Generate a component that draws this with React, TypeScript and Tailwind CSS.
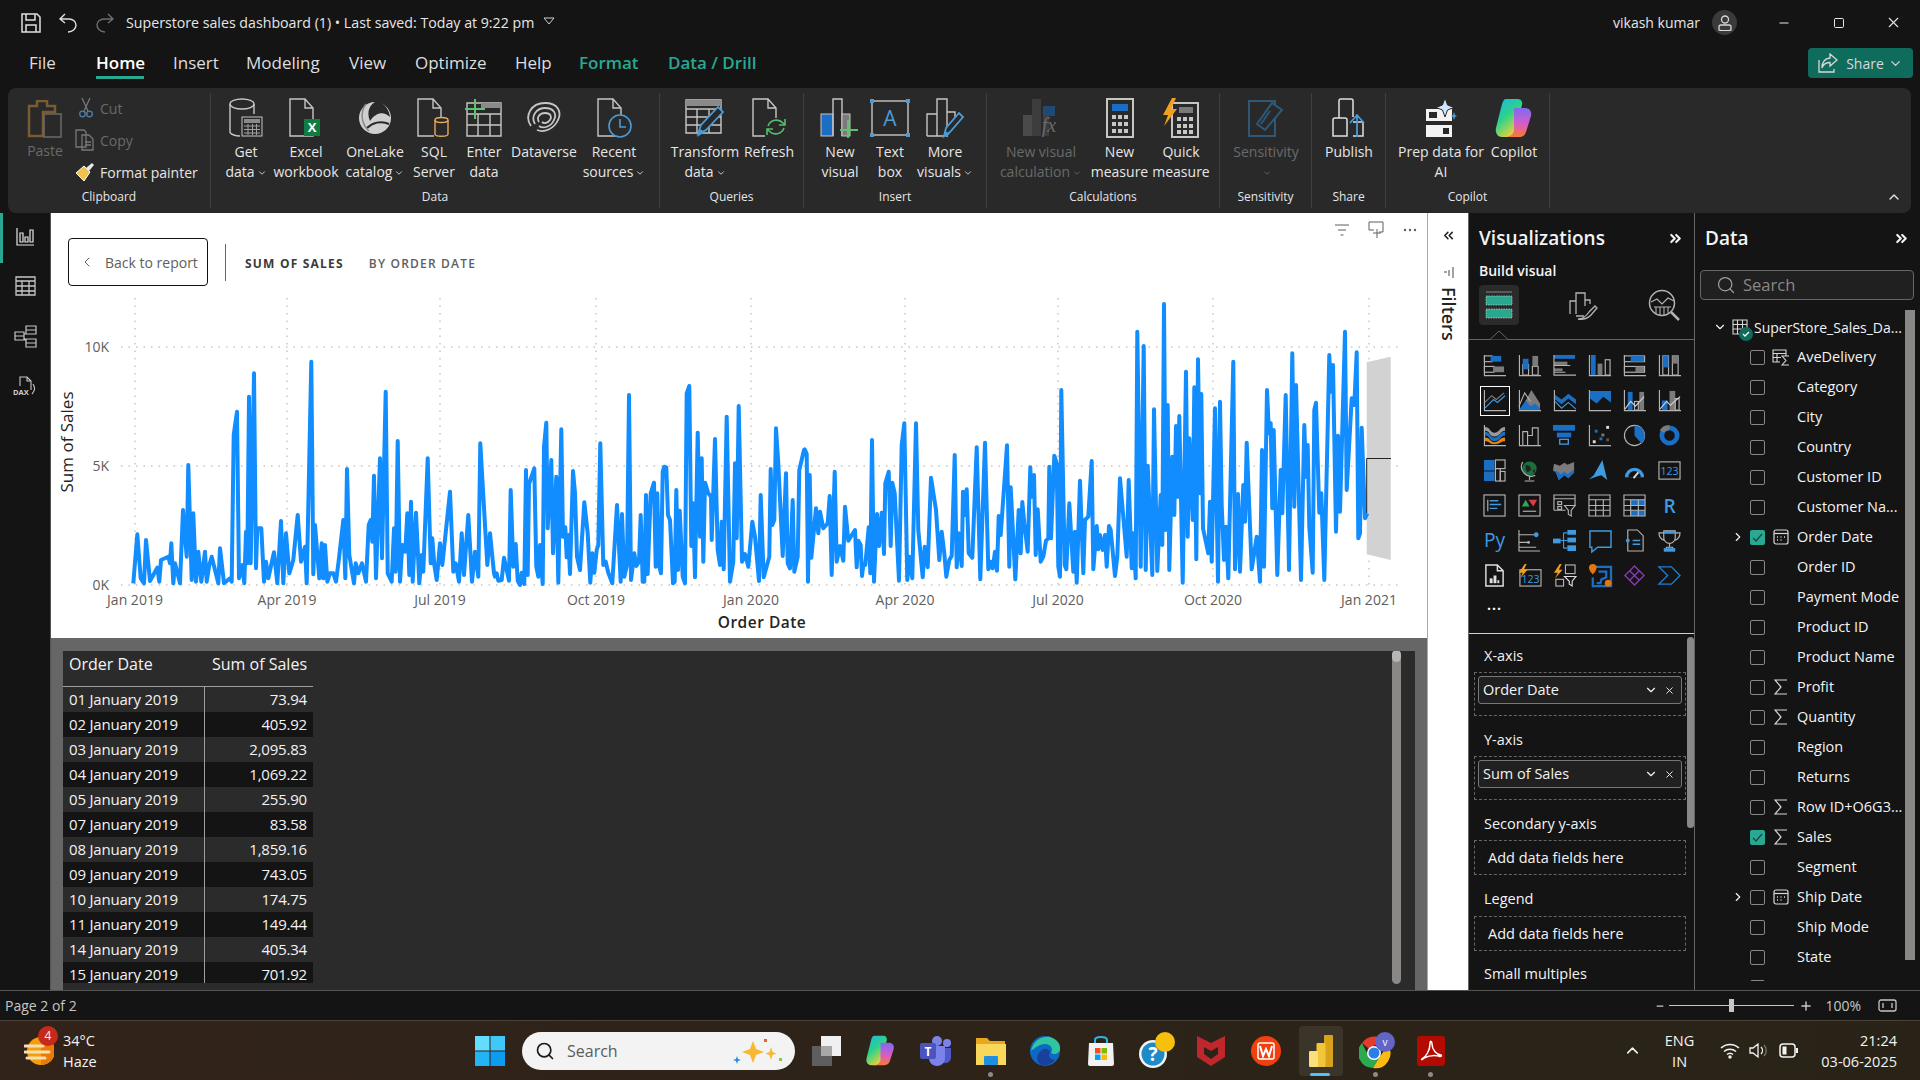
import type { ReactNode } from 'react';
import { ChevronDown, ChevronRight, ChevronUp, ChevronsLeft, ChevronsRight, Minus, Plus, Search, Square, X } from 'lucide-react';

const G = '#b5b3b1';
const B = '#1a6fc4';
const L = '#3f9ae0';
const D = '#7b7b7b';

const bl = (x: number, y: number, w: number, h: number) => <rect x={x} y={y} width={w} height={h} fill={B} stroke="none" />;
const gy = (x: number, y: number, w: number, h: number) => <rect x={x} y={y} width={w} height={h} fill={D} stroke="none" />;
const box = (x: number, y: number, w: number, h: number) => <rect x={x} y={y} width={w} height={h} />;
const axes = <path d="M1.5 1v21.5H24" />;

const vizIcons: ReactNode[] = [
  <>{axes}{box(1.5, 2, 8, 6)}{bl(8, 2, 11, 6)}{box(1.5, 13, 10, 6)}{gy(11, 13, 11, 6)}</>,
  <>{axes}{box(5, 11, 6, 11)}{bl(5, 5, 6, 11)}{box(15, 13, 6, 9)}{gy(15, 2, 6, 11)}</>,
  <>{bl(1, 1, 22, 4)}{gy(1, 8, 14, 4)}{gy(1, 15, 9, 3)}<path d="M1 1v21h23M1 12h17M1 19h12" /></>,
  <>{axes}{bl(3, 1, 5, 21)}{gy(10, 10, 5, 12)}{box(18, 6, 5, 16)}</>,
  <>{axes}{box(1.5, 2, 21, 6)}{bl(8, 2, 14, 6)}{box(1.5, 13, 21, 6)}{gy(13, 13, 9, 6)}</>,
  <>{axes}{box(5, 2, 6, 20)}{bl(5, 2, 6, 12)}{box(15, 2, 6, 20)}{gy(15, 2, 6, 8)}</>,
  <><path d="M1.5 1v21.5H24" /><path d="M2 14l7-7 5 4 8-7" stroke={D} /><path d="M2 20l9-9 4 3 8-7" stroke={L} /></>,
  <>{axes}<path d="M8 12L14 1l9 14v7H8z" fill={D} stroke="none" /><path d="M1 22l7-10 5 6 5-3 5 5v2z" fill={B} stroke="none" /><path d="M1 18L7 4l6 9" /></>,
  <>{axes}<path d="M2 6l7 5 7-6 8 6v5l-8-6-7 6-7-5z" fill={B} stroke="none" /><path d="M2 13l7 7 7-6 8 7" stroke={L} /></>,
  <>{axes}<path d="M2 2h22v12l-8-6-7 7-7-5z" fill={B} stroke="none" /></>,
  <>{axes}{bl(5, 3, 5, 19)}{box(12, 13, 4, 9)}{gy(17, 3, 5, 19)}<path d="M2 21l6-8 5 5 9-10" stroke="#d0d0d0" /></>,
  <>{axes}{bl(4, 12, 6, 10)}{gy(12, 2, 6, 20)}{box(18, 10, 4, 12)}<path d="M2 21l7-8 4 4 10-9" stroke="#d0d0d0" /></>,
  <>{axes}<path d="M2 3c6 0 5 6 10 6s5-6 11-6v4c-5 0-5 6-11 6S8 7 2 7z" fill="#9a9a9a" stroke="none" /><path d="M2 8c6 0 5 6 10 6s5-6 11-6v4c-5 0-5 6-11 6s-4-6-10-6z" fill={B} stroke="none" /><path d="M2 14c6 0 5 5 10 5s5-5 11-5v4c-5 0-5 3-11 3s-4-3-10-3z" fill="#e8850c" stroke="none" /></>,
  <>{axes}<path d="M5 22V8h5v14M10 12h5V4h6v18" /></>,
  <>{bl(0, 1, 23, 6)}{bl(4, 9, 15, 5)}<rect x="7" y="16" width="9" height="5" fill="none" stroke={L} strokeWidth="1.4" /></>,
  <>{axes}{bl(7, 6, 3, 3)}{gy(14, 10, 3, 3)}{bl(12, 14, 3, 3)}<rect x="5" y="17" width="3" height="3" fill="#ddd" stroke="none" /><rect x="19" y="2" width="3" height="3" fill="#ddd" stroke="none" /><rect x="19" y="15" width="3" height="3" fill="#555" stroke="none" /></>,
  <><circle cx="12" cy="12" r="10.5" /><path d="M12 1.5A10.5 10.5 0 0 1 19 20L12 12z" fill={B} stroke="none" /></>,
  <><circle cx="12" cy="12" r="8" stroke={B} strokeWidth="5" /><path d="M4 8a8 8 0 0 1 8-4" stroke={D} strokeWidth="5" /></>,
  <>{bl(1, 1, 11, 11)}{bl(1, 13, 11, 10)}{box(13, 1, 10, 9)}{box(13, 10, 5, 13)}{box(18, 13, 5, 10)}</>,
  <><circle cx="12" cy="10" r="7.5" fill="#1c6e3d" stroke="none" /><path d="M8 6l4 1 2 4-4 3-2-3zM15 12l3-1-1 4z" fill="#222" stroke="none" /><path d="M5 3a10 10 0 0 0 13 14M12 18v4M7 23h10" /></>,
  <><path d="M1 5l6 2 5-3 3 2 7-3v11l-6 6-4-3-6 5-3-8-3-2z" fill={D} stroke="none" /><path d="M1 12l4 1 3 3 4-3 3 3 7-5v3l-6 6-4-3-6 5-3-8z" fill={B} stroke="none" /></>,
  <path d="M15 1L6 17l-5 4 9-3 4-1 6 5z" fill={L} stroke="none" />,
  <><path d="M2 19a10 10 0 0 1 20 0z" fill={L} stroke="none" /><path d="M5.5 19a6.500 6.500 0 0 1 13 0z" fill="#141414" stroke="none" /><path d="M11 20l5-6" stroke="#ddd" strokeWidth="2" /></>,
  <><rect x="1" y="3" width="22" height="18" /><text x="12" y="17" textAnchor="middle" fontSize="11" fill={L} stroke="none" fontFamily="Open Sans, sans-serif">123</text></>,
  <><rect x="1" y="1" width="22" height="22" /><path d="M5 6v12" /><path d="M7 7h9M7 11h12M7 15h8" stroke={L} strokeWidth="1.5" /></>,
  <><rect x="1" y="1" width="22" height="22" /><path d="M5 18h14" /><path d="M8 6l4 7H4z" fill="#2ea84f" stroke="none" /><path d="M11 6h9l-4 7z" fill="#e03b45" stroke="none" /></>,
  <><path d="M1 17V1h22v11M1 5h22M1 17h12" />{box(5, 8, 4, 3)}{box(5, 13, 4, 3)}<path d="M12 12h11l-4 5v6l-3-2v-4z" /></>,
  <><path d="M1 1h22v22H1zM1 6h22M1 12h22M1 17h22M8 6v17M16 6v17" /></>,
  <>{bl(8, 6, 15, 6)}{bl(8, 17, 15, 6)}<path d="M1 1h22v22H1zM1 6h22M1 12h22M1 17h22M8 6v17M16 6v17" /></>,
  <text x="12" y="20" textAnchor="middle" fontSize="20" fill={L} stroke="none" fontWeight="600" fontFamily="Open Sans, sans-serif">R</text>,
  <text x="12" y="19" textAnchor="middle" fontSize="20" fill={L} stroke="none" fontFamily="Open Sans, sans-serif">Py</text>,
  <><path d="M1 1v22h22M1 6h17M1 14h10M1 19h18" /><circle cx="19" cy="6" r="2.500" fill={L} stroke="none" /><circle cx="11" cy="14" r="1.500" fill={G} stroke="none" /></>,
  <><g fill={L} stroke="none"><rect x="0" y="10" width="8" height="5" /><rect x="15" y="1" width="9" height="5" /><rect x="15" y="9" width="9" height="5" /><rect x="15" y="17" width="9" height="6" /></g><path d="M8 12h3M11 4v16M11 4h4M11 12h4M11 20h4" stroke={L} /></>,
  <path d="M2 2h22v17H10l-6 5v-5H2z" stroke={L} strokeWidth="1.5" />,
  <><path d="M5 1h10l6 6v16H5zM5 10" /><circle cx="5" cy="12" r="2" fill={L} stroke="none" /><path d="M10 12h8M10 16h8" stroke={L} strokeWidth="1.5" /></>,
  <><path d="M6 2h12v7a6 6 0 0 1-12 0zM6 4H1c0 5 2 7 6 8M18 4h5c0 5-2 7-6 8M12 15v4M7 23l2-4h6l2 4z" /><rect x="6" y="2" width="12" height="3" fill={L} stroke="none" /><rect x="6" y="20" width="12" height="3" fill={L} stroke="none" /></>,
  <><path d="M3 1h12l6 6v16H3zM15 1v6h6" stroke="#e0e0e0" strokeWidth="1.5" /><g fill="#e0e0e0" stroke="none"><rect x="7" y="15" width="3" height="5" /><rect x="11" y="12" width="3" height="8" /><rect x="15" y="17" width="2" height="3" /></g></>,
  <><rect x="2" y="6" width="22" height="17" /><text x="13" y="20" textAnchor="middle" fontSize="11" fill={L} stroke="none" fontFamily="Open Sans, sans-serif">123</text><path d="M7 0L1 9h4l-3 6 8-9H6l3-6z" fill="#f0a020" stroke="none" /></>,
  <><path d="M7 0L1 9h4l-3 6 8-9H6l3-6z" fill="#f0a020" stroke="none" />{box(3, 16, 8, 7)}{box(13, 1, 10, 9)}<path d="M12 13h12l-4 5v5l-3-2v-3z" stroke="#ddd" /></>,
  <><path d="M6 3h18v20H5V14M11 8h8v6l-5 2-1 4H9" stroke={B} strokeWidth="2.4" /><path d="M5 0a4 4 0 0 1 4 4c0 3-4 7-4 7S1 7 1 4a4 4 0 0 1 4-4z" fill="#e8750c" stroke="none" /><circle cx="21" cy="20" r="3.500" fill="#e8750c" stroke="none" /></>,
  <><path d="M12 2l10 10-10 10L2 12zM7 7l10 10M17 7L7 17" stroke="#8a3ab9" strokeWidth="1.4" /></>,
  <path d="M1 3h13l9 9-9 9H1l9-9zM1 3l9 9" stroke="#1d7fd8" strokeWidth="1.4" />,
];

type Field = { n: string; t?: 'sigma' | 'cal' | 'calc'; chev?: boolean; on?: boolean };
const fields: Field[] = [
  { n: 'AveDelivery', t: 'calc' },
  { n: 'Category' },
  { n: 'City' },
  { n: 'Country' },
  { n: 'Customer ID' },
  { n: 'Customer Na...' },
  { n: 'Order Date', t: 'cal', chev: true, on: true },
  { n: 'Order ID' },
  { n: 'Payment Mode' },
  { n: 'Product ID' },
  { n: 'Product Name' },
  { n: 'Profit', t: 'sigma' },
  { n: 'Quantity', t: 'sigma' },
  { n: 'Region' },
  { n: 'Returns' },
  { n: 'Row ID+O6G3...', t: 'sigma' },
  { n: 'Sales', t: 'sigma', on: true },
  { n: 'Segment' },
  { n: 'Ship Date', t: 'cal', chev: true },
  { n: 'Ship Mode' },
  { n: 'State' },
  { n: 'Sub-Category' },
];

const rows = [
  ['01 January 2019', '73.94'],
  ['02 January 2019', '405.92'],
  ['03 January 2019', '2,095.83'],
  ['04 January 2019', '1,069.22'],
  ['05 January 2019', '255.90'],
  ['07 January 2019', '83.58'],
  ['08 January 2019', '1,859.16'],
  ['09 January 2019', '743.05'],
  ['10 January 2019', '174.75'],
  ['11 January 2019', '149.44'],
  ['14 January 2019', '405.34'],
  ['15 January 2019', '701.92'],
];

// traced from the reference, in crop pixels (3x)
const seg1 = [400,1105,412,958,422,1090,432,1105,438,975,450,1098,472,1058,478,1100,483,1035,505,1025,510,1045,514,985,520,1105,525,1045,540,1105,549,885,560,1025,565,750,575,1095,580,895,588,1100,595,1010,604,1100,615,1010,620,1100,628,1050,635,1025,655,1105,660,1000,672,1105,690,1090,695,1100,701,660,711,590,717,1090,727,1050,733,1105,738,950,742,1045,747,545,752,1045,762,475,768,1060,772,940,784,940,792,1100,798,1040,805,1090,822,1012,832,1105,843,918,850,1105,858,955,868,1075,880,1035,893,900,903,1040,915,995,920,1105,934,440,940,1078,945,930,958,1090,965,985,970,1090,975,990,982,1100,990,1075,1000,1075,1008,1100,1017,1030,1030,915,1036,1090,1041,762,1048,1020,1062,1105,1067,1045,1075,1075,1086,1045,1098,1100,1106,930,1112,915,1117,980,1122,782,1128,1090,1140,730,1146,1030,1157,530,1163,1075,1175,1100,1182,940,1187,1070,1193,678,1200,1100,1207,990,1216,1010,1222,895,1228,1080,1233,860,1238,1100,1248,893,1258,1105,1265,1020,1270,1070,1283,730,1292,1045,1297,970,1303,1050,1310,1095,1320,985,1327,1050,1350,830,1360,1070,1367,1045,1377,1100,1385,955,1392,1080,1405,900,1416,1100,1425,1010,1435,1085,1441,685,1462,1050,1470,955,1482,1075];
const seg2 = [0,860,5,850,10,872,20,870,27,803,42,872,47,600,55,830,62,762,68,872,75,885,80,848,88,882,93,540,98,855,102,582,118,535,124,830,130,860,135,765,143,882,147,470,154,398,158,715,169,510,174,790,184,560,190,878,199,418,204,740,211,712,215,802,220,735,225,852,234,543,240,610,246,800,255,840,268,637,278,730,286,878,292,790,298,848,305,780,310,765,316,460,325,825,332,815,340,848,352,880,366,645,377,875,381,672,388,860,396,825,402,315,408,870,418,790,424,828,432,815,437,675,443,875,448,875,453,615,458,852,467,610,477,578,482,830,487,610,492,825,498,850,503,545,508,530,514,532,519,675,525,690,534,880,539,875,544,600,549,840,554,662,563,860,570,880,575,310,583,288,589,768,594,640,600,862,608,428,615,740,620,505,625,815,630,578,640,610,648,620,650,750,660,447,668,780,675,825,680,695,686,838,695,380,705,875,715,815,720,520,725,745,731,348,741,815,750,792,760,830,772,695,780,740,792,873,797,615,806,862,823,800,827,537,832,705,838,690,843,415,850,520,863,798,873,550,878,820,885,835,893,630,898,845,908,800,913,540,927,480];
const seg3 = [14,478,20,492,24,875,29,555,34,803,48,655,55,730,60,665,70,715,83,700,89,618,95,855,104,545,110,815,120,768,130,812,135,650,145,752,165,720,170,832,175,752,182,765,186,858,190,825,196,825,206,712,211,850,216,450,222,875,231,672,237,768,245,668,252,792,256,580,266,545,272,768,277,578,284,610,297,872,305,465,313,400,322,870,328,800,337,865,348,400,355,720,368,862,374,770,383,832,393,563,408,660,418,810,425,725,433,790,439,860,448,810,455,798,464,495,470,832,476,730,485,828,489,605,495,675,500,598,506,790,517,803,530,472,541,868,555,458,565,838,572,815,578,835,585,785,591,842,596,678,602,735,621,466,628,830,632,592,646,868,656,660,662,790,667,636,673,700,683,785,691,532,695,620,702,555,707,795,713,658,722,815,730,800,738,752,745,745,748,530,753,745,763,497,770,520,775,830,780,860,784,300,794,825,799,838,808,640,820,845,825,725,830,878,840,572,850,850,855,690,865,680,875,513,880,838,890,708,895,778];
const seg4 = [0,735,8,780,15,735,20,830,27,708,32,720,45,858,52,800,60,565,80,800,86,570,95,835,100,730,107,865,112,125,122,830,131,168,137,840,143,527,157,855,162,358,172,843,182,615,187,765,192,42,197,720,203,345,208,840,217,500,223,675,228,408,233,620,238,378,248,878,258,245,263,740,268,445,278,690,283,292,289,808,294,208,300,610,304,312,309,715,325,790,330,635,335,815,345,355,354,875,360,335,365,645,372,810,378,710,385,865,400,215,405,838,414,612,420,845,430,585,435,695,440,458,455,838,470,740,480,875,486,480,492,830,501,300,507,430,512,400,517,655,521,420,532,855,542,540,547,670,557,315,567,840,577,190,583,650,588,285,603,870,613,405,618,560,623,465,628,710,638,848,643,360,648,338,658,668,664,610,673,870,688,195,693,305,699,225,708,725,714,437,720,665,735,125,740,600,755,325,763,345,770,187,775,745,780,730,785,413,795,685,802,670];

function trace(seg: number[], ox: number, oy: number) {
  const out: string[] = [];
  for (let i = 0; i < seg.length; i += 2) out.push(`${(ox + seg[i] / 3).toFixed(1)},${(oy + seg[i + 1] / 3).toFixed(1)}`);
  return out;
}
const linePoints = [...trace(seg1, 0, 215), ...trace(seg2, 495, 290), ...trace(seg3, 800, 290), ...trace(seg4, 1100, 290)].join(' ');

const xTicks = [
  { x: 135, l: 'Jan 2019' }, { x: 287, l: 'Apr 2019' }, { x: 440, l: 'Jul 2019' }, { x: 596, l: 'Oct 2019' }, { x: 751, l: 'Jan 2020' },
  { x: 905, l: 'Apr 2020' }, { x: 1058, l: 'Jul 2020' }, { x: 1213, l: 'Oct 2020' }, { x: 1369, l: 'Jan 2021' },
];

function Chart() {
  return (
    <svg viewBox="51 290 1376 348" className="w-[1376px] h-[348px] block">
      {xTicks.map((t) => (
        <g key={t.x}>
          <line x1={t.x} x2={t.x} y1={298} y2={590} stroke="#c8c6c4" strokeWidth="1.5" strokeDasharray="1.500 6" />
          <text x={t.x} y={605} textAnchor="middle" fontSize="14" fill="#605e5c">{t.l}</text>
        </g>
      ))}
      {[347, 466, 585].map((y) => (
        <line key={y} x1={121} x2={1398} y1={y} y2={y} stroke="#c8c6c4" strokeWidth="1.5" strokeDasharray="1.500 6" />
      ))}
      <text x={109} y={352} textAnchor="end" fontSize="14" fill="#605e5c">10K</text>
      <text x={109} y={471} textAnchor="end" fontSize="14" fill="#605e5c">5K</text>
      <text x={109} y={590} textAnchor="end" fontSize="14" fill="#605e5c">0K</text>
      <text transform="translate(73 442) rotate(-90)" textAnchor="middle" fontSize="17" fontWeight="500" fill="#252423">Sum of Sales</text>
      <text x={762} y={628} textAnchor="middle" fontSize="15.500" fontWeight="600" letterSpacing="0.5" fill="#252423">Order Date</text>
      <polygon points="1366.700,362.300 1390.700,356.700 1390.700,560 1366.700,554.300" fill="#d2d2d2" />
      <polyline points={linePoints} fill="none" stroke="#118dff" strokeWidth="4" strokeLinejoin="round" />
      <path d="M1366.700 513V458.500H1391" fill="none" stroke="#222" strokeWidth="1" />
    </svg>
  );
}

function RibbonBtn({ cls, icon, lines, dim, caret }: { cls: string; icon: ReactNode; lines: string[]; dim?: boolean; caret?: boolean }) {
  return (
    <div className={`${cls} flex flex-col items-center pt-[5px] shrink-0`}>
      <div className="h-[44px] flex items-start justify-center">{icon}</div>
      <div className={`text-center leading-[20px] text-[14px] whitespace-nowrap ${dim ? 'text-[#6a6a6a]' : 'text-[#e6e6e6]'}`}>
        {lines.map((l, i) => (
          <div key={l + i} className="flex items-center justify-center h-[20px]">
            {l}
            {caret && i === lines.length - 1 && <ChevronDown size={10} className="ml-[2px] mt-[2px]" />}
          </div>
        ))}
      </div>
    </div>
  );
}

function Group({ label, cls, pad, children }: { label: string; cls: string; pad?: string; children: ReactNode }) {
  return (
    <div className={`${cls} h-[115px] mt-[5px] flex flex-col border-r border-[#3f3f3f] shrink-0`}>
      <div className={`h-[95px] flex ${pad ?? ''}`}>{children}</div>
      <div className="h-[18px] text-center text-[12px] leading-[18px] text-[#e6e6e6]">{label}</div>
    </div>
  );
}

const s = { fill: 'none', stroke: '#c8c6c4', strokeWidth: 1.4 };

function Doc({ x = 2 }: { x?: number }) {
  return <path d={`M${x} 1h15l8 9v28H${x}zM${x + 15} 1v9h8`} {...s} />;
}

function CopilotMark({ size, id }: { size: number; id: string }) {
  return (
    <svg width={size} height={size} viewBox="0 0 40 40">
      <defs>
        <linearGradient id={`${id}a`} x1="0" y1="0" x2="0.6" y2="1">
          <stop offset="0" stopColor="#1fb2f0" /><stop offset="0.5" stopColor="#2bd38a" /><stop offset="1" stopColor="#f7d236" />
        </linearGradient>
        <linearGradient id={`${id}b`} x1="0.5" y1="0" x2="0.5" y2="1">
          <stop offset="0" stopColor="#7d6cf0" /><stop offset="0.55" stopColor="#d85bc8" /><stop offset="1" stopColor="#f97a32" />
        </linearGradient>
      </defs>
      <path d="M12 1h12c3 0 5 3 4 6l-7 26c-1 3-3 6-7 6H8c-5 0-7-5-6-9l6-24c1-3 2-5 4-5z" fill={`url(#${id}a)`} />
      <path d="M20 10h11c5 0 7 4 6 8l-5 16c-1 3-3 5-7 5H13c4-1 6-3 7-6z" fill={`url(#${id}b)`} />
    </svg>
  );
}

function Ribbon() {
  return (
    <div className="mx-2 h-[125px] w-[1903px] rounded-lg bg-[#292929] flex shrink-0">
      <Group label="Clipboard" cls="w-[203px]">
        <div className="w-[67px] pl-[7px] flex flex-col items-center pt-[7px] text-[#6a6a6a] text-[14px]">
          <svg width="36" height="38" viewBox="0 0 36 38">
            <path d="M2 6h8V1h10v5h8v6H16v24H2z" fill="none" stroke="#7a5c32" strokeWidth="2.500" />
            <rect x="17" y="14" width="17" height="23" fill="none" stroke="#6a6a6a" strokeWidth="1.500" />
          </svg>
          <div className="mt-[2px]">Paste</div>
        </div>
        <div className="text-[14px] text-[#6a6a6a] mt-[-1px]">
          <div className="h-[32px] flex items-center gap-[7px] pl-[4px]">
            <svg width="14" height="22" viewBox="0 0 14 22" fill="none" stroke="#777" strokeWidth="1.300"><path d="M3 1l6 13M11 1L5 14" /><circle cx="3.500" cy="17" r="2.800" stroke="#4e7fa8" /><circle cx="10.500" cy="17" r="2.800" stroke="#4e7fa8" /></svg>
            Cut
          </div>
          <div className="h-[32px] flex items-center gap-[5px]">
            <svg width="20" height="22" viewBox="0 0 20 22" fill="none" stroke="#777" strokeWidth="1.300"><path d="M1 1h8l2 2v15H1zM7 6h7l4 4v11H7zM10 13h6M10 16h6" /></svg>
            Copy
          </div>
          <div className="h-[32px] flex items-center gap-[5px] text-[#e6e6e6]">
            <svg width="20" height="20" viewBox="0 0 20 20"><path d="M1 11l8-7 6 6-6 9z" fill="#f2c14b" stroke="#fff" strokeWidth="1" /><path d="M11 6l6-5 2 2-5 6z" fill="#e8e8e8" /></svg>
            Format painter
          </div>
        </div>
      </Group>
      <Group label="Data" cls="w-[449px]" pad="pl-[12px]">
        <RibbonBtn cls="w-[46px]" lines={['Get', 'data']} caret icon={
          <svg width="36" height="40" viewBox="0 0 36 40"><ellipse cx="14" cy="6" rx="12" ry="5" {...s} /><path d="M2 6v28c0 2 5 4 10 4M26 6v10" {...s} /><rect x="14" y="19" width="20" height="19" fill="#292929" stroke="#c8c6c4" /><rect x="16" y="21" width="16" height="4" fill="#8a8a8a" /><path d="M16 28h16M16 31.500h16M16 35h16M20 26v11M24.500 26v11M28.500 26v11" stroke="#a0a0a0" /></svg>
        } />
        <RibbonBtn cls="w-[74px]" lines={['Excel', 'workbook']} icon={
          <svg width="36" height="40" viewBox="0 0 36 40"><Doc x={2} /><rect x="16" y="21" width="16" height="17" fill="#107c41" /><text x="24" y="34" textAnchor="middle" fontSize="13" fontWeight="700" fill="#fff">X</text></svg>
        } />
        <RibbonBtn cls="w-[64px]" lines={['OneLake', 'catalog']} caret icon={
          <svg width="36" height="40" viewBox="0 0 36 40"><circle cx="18" cy="20" r="16" fill="#cfcfcf" /><path d="M20 3c-7 3-11 10-7 20 6-9 14-10 20-4-1-8-6-14-13-16z" fill="#292929" /><path d="M10 30c5-5 14-8 22-4" fill="none" stroke="#292929" strokeWidth="2" /><path d="M9 6c-6 8-5 20 3 27" fill="none" stroke="#8a8a8a" strokeWidth="1.500" /></svg>
        } />
        <RibbonBtn cls="w-[54px]" lines={['SQL', 'Server']} icon={
          <svg width="36" height="40" viewBox="0 0 36 40"><Doc x={2} /><rect x="18" y="19" width="15" height="20" fill="#292929" /><path d="M19 22v14c0 3 13 3 13 0V22" fill="none" stroke="#e8a95a" strokeWidth="1.400" /><ellipse cx="25.500" cy="22" rx="6.500" ry="2.500" fill="#292929" stroke="#e8a95a" strokeWidth="1.400" /></svg>
        } />
        <RibbonBtn cls="w-[46px]" lines={['Enter', 'data']} icon={
          <svg width="38" height="40" viewBox="0 0 38 40"><path d="M2 5h34v33H2zM2 16h34M2 27h34M13 16v22M25 16v22" {...s} /><rect x="16" y="5" width="20" height="5" fill="#8a8a8a" /><path d="M0 11h20M10 1v20" stroke="#5ec26f" strokeWidth="2" /></svg>
        } />
        <RibbonBtn cls="w-[74px]" lines={['Dataverse', '\u00a0']} icon={
          <svg width="38" height="40" viewBox="0 0 38 40" fill="none" stroke="#c8c6c4" strokeWidth="1.800"><path d="M6 28C-1 18 6 5 20 5c13 0 17 9 13 17-4 9-14 13-21 10" /><path d="M10 26c-5-8 2-16 10-16 9 0 12 6 9 12-3 7-11 9-15 6" /><path d="M14 24c-3-5 1-9 6-9 6 0 7 4 5 7-2 3-6 4-8 2" /></svg>
        } />
        <RibbonBtn cls="w-[66px]" lines={['Recent', 'sources']} caret icon={
          <svg width="36" height="40" viewBox="0 0 36 40"><Doc x={2} /><circle cx="24" cy="28" r="11" fill="#292929" stroke="#4a9bd8" strokeWidth="1.600" /><path d="M24 21v8h6" fill="none" stroke="#4a9bd8" strokeWidth="1.600" /></svg>
        } />
      </Group>
      <Group label="Queries" cls="w-[144px]" pad="pl-[10px]">
        <RibbonBtn cls="w-[70px]" lines={['Transform', 'data']} caret icon={
          <svg width="40" height="40" viewBox="0 0 40 40"><path d="M1 2h35v33H1zM1 11h35M1 19h35M1 27h35M12 11v24M24 11v24" {...s} /><rect x="1" y="2" width="35" height="6" fill="#8a8a8a" /><path d="M13 36l3-9 17-18 5 5-17 18z" fill="#292929" stroke="#4a9bd8" strokeWidth="1.800" /><path d="M12 39l3-8 5 3z" fill="#4a9bd8" /></svg>
        } />
        <RibbonBtn cls="w-[58px]" lines={['Refresh', '\u00a0']} icon={
          <svg width="36" height="40" viewBox="0 0 36 40"><Doc x={2} /><rect x="14" y="20" width="22" height="20" fill="#292929" /><path d="M17 28a9 9 0 0 1 15-3l2 2M33 30a9 9 0 0 1-15 3l-2-2M34 21v6h-6M16 37v-6h6" fill="none" stroke="#57bd6e" strokeWidth="1.600" /></svg>
        } />
      </Group>
      <Group label="Insert" cls="w-[183px]" pad="pl-[12px]">
        <RibbonBtn cls="w-[48px]" lines={['New', 'visual']} icon={
          <svg width="40" height="40" viewBox="0 0 40 40"><rect x="1" y="16" width="12" height="22" fill="#1a6fc4" stroke="#c8c6c4" /><path d="M13 38V1h9v37" {...s} /><rect x="22" y="16" width="8" height="22" fill="#7a7a7a" stroke="#c8c6c4" /><path d="M28 22v18M20 32h18" stroke="#5ec26f" strokeWidth="2" /></svg>
        } />
        <RibbonBtn cls="w-[52px]" lines={['Text', 'box']} icon={
          <svg width="40" height="40" viewBox="0 0 40 40"><rect x="2" y="3" width="36" height="34" {...s} /><g fill="#4a9bd8"><rect x="0" y="1" width="4" height="4" /><rect x="36" y="1" width="4" height="4" /><rect x="0" y="35" width="4" height="4" /><rect x="36" y="35" width="4" height="4" /></g><text x="20" y="28" textAnchor="middle" fontSize="21" fill="#4a9bd8">A</text></svg>
        } />
        <RibbonBtn cls="w-[58px]" lines={['More', 'visuals']} caret icon={
          <svg width="38" height="40" viewBox="0 0 38 40"><path d="M1 38V16h10M11 38V1h10v38M21 14h8v8M1 38h18" {...s} /><path d="M18 38l2-8 13-15 4 4-13 15z" fill="#292929" stroke="#4a9bd8" strokeWidth="1.800" /><path d="M17 40l2-7 5 3z" fill="#4a9bd8" /></svg>
        } />
      </Group>
      <Group label="Calculations" cls="w-[233px]" pad="pl-[7px]">
        <RibbonBtn cls="w-[94px]" lines={['New visual', 'calculation']} caret dim icon={
          <svg width="38" height="40" viewBox="0 0 38 40"><rect x="1" y="17" width="9" height="21" fill="#4a4a4a" /><rect x="10" y="1" width="9" height="37" fill="#3d3d3d" /><rect x="21" y="8" width="12" height="10" fill="#1f4a72" /><rect x="21" y="18" width="6" height="20" fill="#3d3d3d" /><text x="27" y="34" textAnchor="middle" fontSize="20" fontStyle="italic" fontFamily="Liberation Serif, serif" fill="#6a6a6a">fx</text></svg>
        } />
        <RibbonBtn cls="w-[63px]" lines={['New', 'measure']} icon={
          <svg width="28" height="40" viewBox="0 0 28 40"><rect x="1" y="1" width="26" height="38" fill="none" stroke="#c8c6c4" strokeWidth="2" /><rect x="6" y="6" width="16" height="7" fill="#1a6fc4" /><g fill="#c8c6c4"><rect x="6" y="17" width="4" height="4" /><rect x="12" y="17" width="4" height="4" /><rect x="18" y="17" width="4" height="4" /><rect x="6" y="24" width="4" height="4" /><rect x="12" y="24" width="4" height="4" /><rect x="18" y="24" width="4" height="4" /><rect x="6" y="31" width="4" height="4" /><rect x="12" y="31" width="4" height="4" /><rect x="18" y="31" width="4" height="4" /></g></svg>
        } />
        <RibbonBtn cls="w-[60px]" lines={['Quick', 'measure']} icon={
          <svg width="36" height="40" viewBox="0 0 36 40"><rect x="9" y="5" width="26" height="34" fill="none" stroke="#c8c6c4" strokeWidth="2" /><rect x="16" y="9" width="14" height="6" fill="#7a7a7a" /><g fill="#c8c6c4"><rect x="14" y="19" width="4" height="4" /><rect x="20" y="19" width="4" height="4" /><rect x="26" y="19" width="4" height="4" /><rect x="14" y="26" width="4" height="4" /><rect x="20" y="26" width="4" height="4" /><rect x="26" y="26" width="4" height="4" /><rect x="14" y="32" width="4" height="4" /><rect x="20" y="32" width="4" height="4" /><rect x="26" y="32" width="4" height="4" /></g><path d="M9 0L0 17h5L1 28 14 11H8l5-11z" fill="#f0a020" /></svg>
        } />
      </Group>
      <Group label="Sensitivity" cls="w-[92px]">
        <RibbonBtn cls="w-[92px]" lines={['Sensitivity', '']} caret dim icon={
          <svg width="38" height="40" viewBox="0 0 38 40"><rect x="2" y="3" width="26" height="35" fill="none" stroke="#2e5878" strokeWidth="2" /><path d="M10 26L25 5l10 7-17 20z" fill="#292929" stroke="#2e5878" strokeWidth="2" /><path d="M14 26l9-13" stroke="#2e5878" strokeWidth="2" /></svg>
        } />
      </Group>
      <Group label="Share" cls="w-[74px]">
        <RibbonBtn cls="w-[74px]" lines={['Publish', '\u00a0']} icon={
          <svg width="36" height="40" viewBox="0 0 36 40"><path d="M2 38V22c0-1 1-2 2-2h10c1 0 2 1 2 2v16zM8 20V3c0-1 1-2 2-2h10c1 0 2 1 2 2v16" fill="none" stroke="#e0e0e0" strokeWidth="1.500" /><path d="M22 24h10v14H22" fill="none" stroke="#e0e0e0" strokeWidth="1.500" /><path d="M26 39V18M19 25l7-8 7 8" fill="none" stroke="#4a9bd8" strokeWidth="1.800" /></svg>
        } />
      </Group>
      <Group label="Copilot" cls="w-[164px]" pad="pl-[9px]">
        <RibbonBtn cls="w-[92px]" lines={['Prep data for', 'AI']} icon={
          <svg width="32" height="40" viewBox="0 0 32 40"><rect x="1" y="11" width="26" height="12" fill="#f3f3f3" /><rect x="1" y="27" width="26" height="12" fill="#f3f3f3" /><rect x="4" y="14" width="8" height="6" fill="#292929" /><rect x="18" y="30" width="6" height="6" fill="#292929" /><path d="M20 0l2.500 7L29 9.500 22.500 12 20 19l-2.500-7L11 9.500 17.500 7z" fill="#cfe8ff" stroke="#292929" /><path d="M29 14l1 3 2 1-2 1-1 3-1-3-2-1 2-1z" fill="#4a9bd8" /></svg>
        } />
        <RibbonBtn cls="w-[54px]" lines={['Copilot', '\u00a0']} icon={<CopilotMark size={40} id="cp1" />} />
      </Group>
      <div className="ml-auto self-end mb-[8px] mr-[9px] text-[#e6e6e6]"><ChevronUp size={16} /></div>
    </div>
  );
}

function VizPane() {
  return (
    <div className="w-[227px] shrink-0 h-full bg-[#141414] border-x border-[#666] flex flex-col overflow-hidden relative text-[#f3f3f3]">
      <div className="h-[50px] shrink-0 pl-[10px] pr-[10px] flex items-center justify-between">
        <span className="text-[19px] font-semibold">Visualizations</span>
        <ChevronsRight size={17} strokeWidth={3} />
      </div>
      <div className="h-[15px] shrink-0 pl-[10px] text-[14px] leading-[16px] font-semibold">Build visual</div>
      <div className="h-[40px] shrink-0 mt-[7px] flex items-center pl-[10px]">
        <div className="w-[40px] h-[40px] rounded-[4px] bg-[#2b2b2b] flex items-center justify-center">
          <svg width="30" height="30" viewBox="0 0 30 30">
            <path d="M2 2h26" stroke="#8a8a8a" strokeWidth="1" />
            <rect x="2" y="6" width="26" height="9" fill="#2aa88f" stroke="#ddd" strokeWidth="0.600" strokeDasharray="1.500 1" />
            <rect x="2" y="19" width="26" height="9" fill="#2aa88f" stroke="#ddd" strokeWidth="0.600" strokeDasharray="1.500 1" />
          </svg>
        </div>
        <svg width="30" height="30" viewBox="0 0 30 30" fill="none" stroke="#b5b3b1" strokeWidth="1.300" className="ml-[49px]">
          <path d="M2 24V11h6v13M8 11V3h9v13M17 10h5v4M8 26h8" />
          <path d="M10 29c6 0 9-4 11-7l6-6 2 2-6 7c-3 3-8 5-13 4z" />
        </svg>
        <svg width="32" height="32" viewBox="0 0 32 32" fill="none" stroke="#b5b3b1" strokeWidth="1.500" className="ml-[50px]">
          <circle cx="14" cy="14" r="12.500" />
          <path d="M3 13l6-3 5 5 6-6 6 3M6 18h17M8 18v6M12 18v8M16 18v8M20 18v6" strokeWidth="1.100" />
          <path d="M23 23l8 8" strokeWidth="2.500" />
        </svg>
      </div>
      <div className="h-[15px] shrink-0 border-b border-[#666] relative">
        <svg width="22" height="10" viewBox="0 0 22 10" className="absolute left-[19px] bottom-[-1px]">
          <path d="M0 9.500h2L11 1l9 8.500h2" fill="#141414" stroke="#666" />
        </svg>
      </div>
      <div className="ml-[8px] mt-[8px] grid grid-cols-[repeat(6,35px)] auto-rows-[35px] shrink-0">
        {vizIcons.map((ic, i) => (
          <div key={i} className="flex items-center justify-center">
            <div className={`w-[30px] h-[30px] flex items-center justify-center ${i === 6 ? 'border border-white' : ''}`}>
              <svg width="23" height="23" viewBox="0 0 24 24" fill="none" stroke={G} strokeWidth="1.200" overflow="visible">{ic}</svg>
            </div>
          </div>
        ))}
        <div className="h-[30px] pb-[8px] flex items-center justify-center text-[14px] font-bold tracking-[1px]">...</div>
      </div>
      <div className="mt-[5px] border-t border-[#d0d0d0] shrink-0 text-[14.500px]">
        <div className="mt-[12px] h-[20px] pl-[15px] leading-[20px]">X-axis</div>
        <FieldWell name="Order Date" />
        <div className="mt-[14px] h-[20px] pl-[15px] leading-[20px]">Y-axis</div>
        <FieldWell name="Sum of Sales" />
        <div className="mt-[14px] h-[20px] pl-[15px] leading-[20px]">Secondary y-axis</div>
        <EmptyWell cls="mt-[6px]" />
        <div className="mt-[14px] h-[20px] pl-[15px] leading-[20px]">Legend</div>
        <EmptyWell cls="mt-[7px]" />
        <div className="mt-[13px] h-[20px] pl-[15px] leading-[20px]">Small multiples</div>
      </div>
      <div className="absolute right-[0px] top-[424px] w-[7px] h-[191px] rounded-full bg-[#8a8886]" />
    </div>
  );
}

function FieldWell({ name }: { name: string }) {
  return (
    <div className="mt-[6px] ml-[5px] w-[212px] h-[44px] border border-dashed border-[#666] p-[3px]">
      <div className="h-[28px] bg-[#202020] border border-[#777] rounded-[3px] flex items-center pl-[4px] pr-[6px]">
        <span className="flex-1">{name}</span>
        <ChevronDown size={14} className="mr-[6px]" />
        <X size={11} />
      </div>
    </div>
  );
}

function EmptyWell({ cls }: { cls: string }) {
  return (
    <div className={`${cls} ml-[5px] w-[212px] h-[35px] border border-dashed border-[#666] flex items-center pl-[13px]`}>
      Add data fields here
    </div>
  );
}

function FieldIcon({ t }: { t?: Field['t'] }) {
  if (t === 'sigma') return <svg width="14" height="16" viewBox="0 0 14 16" fill="none" stroke="#d8d8d8" strokeWidth="1.200"><path d="M13 1H1l6 7-6 7h12" /></svg>;
  if (t === 'cal')
    return (
      <svg width="16" height="16" viewBox="0 0 16 16" fill="none" stroke="#d8d8d8" strokeWidth="1.200">
        <rect x="1" y="1" width="14" height="14" rx="2" />
        <path d="M1 4.500h14" />
        <path d="M4 8h1M7.500 8h1M11 8h1M4 11h1M7.500 11h1" strokeWidth="1.500" />
      </svg>
    );
  if (t === 'calc')
    return (
      <svg width="18" height="18" viewBox="0 0 18 18" fill="none" stroke="#d8d8d8" strokeWidth="1.100">
        <path d="M8 14H1V2h13v6M1 5.500h13M1 9.500h8M5 5.500V14" />
        <path d="M17 8h-7l4 4.500-4 4.500h7" />
      </svg>
    );
  return null;
}

function Checkbox({ on }: { on?: boolean }) {
  if (on)
    return (
      <div className="w-[15px] h-[15px] shrink-0 rounded-[2px] bg-[#2aa892] flex items-center justify-center">
        <svg width="11" height="9" viewBox="0 0 11 9" fill="none" stroke="#17483f" strokeWidth="1.200"><path d="M1 5l3 3 6-7" /></svg>
      </div>
    );
  return <div className="w-[15px] h-[15px] shrink-0 rounded-[2px] border border-[#8a8886]" />;
}

function DataPane() {
  return (
    <div className="w-[225px] shrink-0 h-full bg-[#141414] relative text-[#f3f3f3] overflow-hidden">
      <div className="h-[50px] pl-[10px] pr-[10px] flex items-center justify-between">
        <span className="text-[19px] font-semibold">Data</span>
        <ChevronsRight size={17} strokeWidth={3} />
      </div>
      <div className="mt-[7px] ml-[5px] w-[214px] h-[30px] rounded-[4px] border border-[#666] bg-[#202020] flex items-center pl-[15px] gap-[7px] text-[#8a8886] text-[16.500px]">
        <Search size={20} color="#a19f9d" strokeWidth={1.500} />
        Search
      </div>
      <div className="mt-[12px] h-[669px] overflow-hidden text-[14.500px]">
        <div className="h-[30px] flex items-center pl-[18px] relative">
          <ChevronDown size={14} />
          <svg width="16" height="16" viewBox="0 0 16 16" fill="none" stroke="#d8d8d8" strokeWidth="1.100" className="ml-[5px]"><path d="M1 1h14v14H1zM1 5.500h14M1 10h14M5.500 1v14M10.500 1v14" /></svg>
          <span className="w-[14px] h-[14px] rounded-full bg-[#0f6b5b] absolute left-[44px] top-[15px] flex items-center justify-center">
            <svg width="8" height="6" viewBox="0 0 8 6" fill="none" stroke="#fff" strokeWidth="1.300"><path d="M1 3l2 2 4-4" /></svg>
          </span>
          <span className="ml-[6px] whitespace-nowrap text-[14px]">SuperStore_Sales_Da...</span>
        </div>
        {fields.map((f) => (
          <div key={f.n} className="h-[30px] flex items-center pl-[36px]">
            <div className="w-[19px] shrink-0">{f.chev && <ChevronRight size={14} />}</div>
            <Checkbox on={f.on} />
            <div className="w-[32px] shrink-0 flex justify-center"><FieldIcon t={f.t} /></div>
            <span className="whitespace-nowrap">{f.n}</span>
          </div>
        ))}
      </div>
      <div className="absolute left-[210px] top-[97px] w-[10px] h-[650px] bg-[#8a8886]" />
    </div>
  );
}

function Canvas() {
  return (
    <div className="w-[1376px] shrink-0 h-full flex flex-col bg-[#666]">
      <div className="h-[425px] shrink-0 bg-white flex flex-col">
        <div className="h-[77px] shrink-0 relative flex items-center pl-[17px]">
          <div className="mt-[20px] w-[140px] h-[48px] border border-[#111] rounded-[4px] flex items-center pl-[10px] text-[#605e5c] text-[14px]">
            <ChevronRight size={16} className="rotate-180" strokeWidth={1.500} />
            <span className="ml-[10px] mt-[2px]">Back to report</span>
          </div>
          <div className="mt-[22px] ml-[17px] w-[1px] h-[37px] bg-[#666]" />
          <div className="mt-[24px] ml-[19px] text-[12px] font-bold tracking-[1.200px] text-[#3b3a39]">SUM OF SALES</div>
          <div className="mt-[24px] ml-[25px] text-[12px] font-semibold tracking-[1.200px] text-[#605e5c]">BY ORDER DATE</div>
          <div className="absolute right-[10px] top-[8px] flex items-center gap-[19px]">
            <svg width="14" height="12" viewBox="0 0 14 12" stroke="#605e5c" strokeWidth="1"><path d="M0 1h14M3 6h8M5.500 11h3" /></svg>
            <svg width="16" height="18" viewBox="0 0 16 18" fill="none" stroke="#605e5c" strokeWidth="1"><path d="M1 1h14v10h-4M1 1v8h5M9 8v9M5 12h8" /></svg>
            <svg width="14" height="4" viewBox="0 0 14 4" fill="#605e5c"><circle cx="2" cy="2" r="1.200" /><circle cx="7" cy="2" r="1.200" /><circle cx="12" cy="2" r="1.200" /></svg>
          </div>
        </div>
        <Chart />
      </div>
      <div className="flex-1 mt-[13px] mx-[12px] bg-[#2b2b2b] relative overflow-hidden text-[#f3f3f3]">
        <div className="w-[250px] h-[332px] overflow-hidden">
          <div className="h-[36px] pl-[6px] pr-[6px] flex justify-between items-start text-[16px] leading-[26px] border-b border-[#a19f9d]">
            <span>Order Date</span>
            <span>Sum of Sales</span>
          </div>
          {rows.map((r, i) => (
            <div key={r[0]} className={`h-[25px] flex items-center text-[15px] tracking-[-0.2px] ${i % 2 ? 'bg-[#141414]' : 'bg-[#2b2b2b]'}`}>
              <div className="w-[142px] h-full pl-[6px] leading-[25px] border-r border-[#a19f9d] whitespace-nowrap">{r[0]}</div>
              <div className="w-[108px] h-full pr-[6px] leading-[25px] text-right">{r[1]}</div>
            </div>
          ))}
        </div>
        <div className="absolute left-[1329px] top-[-1px] w-[9px] h-[334px] rounded-full bg-[#8a8886]">
          <div className="h-[12px] rounded-full bg-[#b8b6b4]" />
        </div>
      </div>
    </div>
  );
}

function Taskbar() {
  const tile = 'w-[55px] h-[60px] flex items-center justify-center relative shrink-0';
  const dot = 'absolute bottom-[4px] left-[25px] w-[5px] h-[5px] rounded-full bg-[#8a8a8a]';
  return (
    <div className="h-[60px] shrink-0 border-t border-[#4a4238] bg-gradient-to-r from-[#32231a] to-[#292317] flex items-center text-[14.500px] text-[#f3f3f3]">
      <div className="w-[462px] shrink-0 flex items-center pl-[24px] h-full relative">
        <svg width="30" height="36" viewBox="0 0 30 36">
          <circle cx="17" cy="18" r="14" fill="#f59e0b" />
          <path d="M17 4a14 14 0 0 1 0 28z" fill="#ea7a0a" />
          <path d="M1 13h18M1 19h24M3 25h18" stroke="#f7e0b0" strokeWidth="3" strokeLinecap="round" />
        </svg>
        <span className="absolute left-[38px] top-[5px] w-[20px] h-[20px] rounded-full bg-[#c42b1c] flex items-center justify-center text-[12px]">4</span>
        <div className="ml-[9px] leading-[21px]">
          <div>34°C</div>
          <div>Haze</div>
        </div>
      </div>
      <div className={tile}>
        <svg width="30" height="30" viewBox="0 0 30 30">
          <rect width="14.500" height="14.500" fill="#63dcff" />
          <rect x="15.500" width="14.500" height="14.500" fill="#40c8f8" />
          <rect y="15.500" width="14.500" height="14.500" fill="#22b4f5" />
          <rect x="15.500" y="15.500" width="14.500" height="14.500" fill="#0e9cf0" />
        </svg>
      </div>
      <div className="ml-[5px] w-[273px] h-[38px] rounded-full bg-[#f3f3f3] flex items-center pl-[13px] text-[#5c5c5c] text-[16px] shrink-0 relative">
        <Search size={20} color="#1a1a1a" strokeWidth={2} />
        <span className="ml-[12px]">Search</span>
        <svg width="52" height="30" viewBox="0 0 52 30" className="ml-auto mr-[10px]">
          <path d="M20 5l3 8 8 3-8 3-3 8-3-8-8-3 8-3z" fill="#f7b731" />
          <path d="M38 11l1.500 5 4 1.500-4 1.500-1.500 5-1.500-5-4-1.500 4-1.500z" fill="#f7b731" />
          <rect x="31" y="3" width="3" height="3" fill="#e8632c" />
          <rect x="46" y="22" width="3" height="3" fill="#8cc63f" />
          <path d="M4 20l1 3 3 1-3 1-1 3-1-3-3-1 3-1z" fill="#2b88d8" />
        </svg>
      </div>
      <div className="ml-[3px] flex">
        <div className={tile}>
          <svg width="30" height="32" viewBox="0 0 30 32">
            <rect x="1" y="11" width="20" height="20" fill="#5e5e5e" />
            <rect x="10" y="1" width="20" height="20" fill="#f0f0f0" />
            <rect x="10" y="11" width="11" height="10" fill="#a8a8a8" />
          </svg>
        </div>
        <div className={tile}><CopilotMark size={31} id="cp2" /></div>
        <div className={tile}>
          <svg width="32" height="30" viewBox="0 0 32 30">
            <circle cx="27" cy="7" r="4" fill="#7b83eb" />
            <circle cx="17" cy="5" r="5" fill="#7b83eb" />
            <path d="M22 12h9v9c0 4-3 6-6 6h-4z" fill="#5059c9" />
            <path d="M9 10h16v12c0 5-4 8-8 8s-8-3-8-8z" fill="#7b83eb" />
            <rect x="0" y="7" width="16" height="16" rx="2" fill="#4b53bc" />
            <text x="8" y="20" textAnchor="middle" fontSize="12" fontWeight="700" fill="#fff">T</text>
          </svg>
        </div>
        <div className={tile}>
          <svg width="31" height="30" viewBox="0 0 31 30">
            <path d="M1 2h11l3 3h15v24H1z" fill="#e8a71e" />
            <rect x="1" y="8" width="30" height="21" fill="#f8d75a" />
            <rect x="9" y="20" width="14" height="9" rx="1" fill="#1f8fe0" />
          </svg>
          <span className={dot} />
        </div>
        <div className={tile}>
          <svg width="31" height="30" viewBox="0 0 31 30">
            <circle cx="15" cy="15" r="15" fill="#0c69c4" />
            <path d="M1 15C3 4 13 0 20 1c7 2 11 7 10 13-1 4-6 5-9 3 3-5-1-9-6-9-6 0-10 4-14 7z" fill="#2fc5a0" />
            <path d="M12 14c2-2 7-2 8 2-3 4 1 8 5 8-3 4-8 6-13 5-6-2-7-10 0-15z" fill="#1a3f9c" />
          </svg>
        </div>
        <div className={tile}>
          <svg width="30" height="30" viewBox="0 0 30 30">
            <path d="M9 8V4c0-4 12-4 12 0v4" fill="none" stroke="#2fb3e8" strokeWidth="2" />
            <path d="M3 7h24l1 21c0 1-1 2-2 2H4c-1 0-2-1-2-2z" fill="#f2f2f2" />
            <rect x="9" y="12" width="5.500" height="5.500" fill="#f25022" />
            <rect x="15.500" y="12" width="5.500" height="5.500" fill="#7fba00" />
            <rect x="9" y="18.500" width="5.500" height="5.500" fill="#00a4ef" />
            <rect x="15.500" y="18.500" width="5.500" height="5.500" fill="#ffb900" />
          </svg>
        </div>
        <div className={tile}>
          <svg width="36" height="38" viewBox="0 0 36 38" className="ml-[3px]">
            <circle cx="14" cy="22" r="14" fill="#f2f2f2" />
            <circle cx="14" cy="22" r="11.500" fill="#1f8ac8" />
            <text x="14" y="29" textAnchor="middle" fontSize="19" fontWeight="700" fill="#fff">?</text>
            <circle cx="26" cy="10" r="10" fill="#f7c00c" />
          </svg>
        </div>
        <div className={tile}>
          <svg width="28" height="30" viewBox="0 0 28 30">
            <path d="M0 0l14 7 14-7v21L14 30 0 21z" fill="#c0272d" />
            <path d="M7 11l7 4 7-4v7l-7 5-7-5z" fill="#2c2318" />
          </svg>
        </div>
        <div className={tile}>
          <svg width="30" height="30" viewBox="0 0 30 30">
            <circle cx="15" cy="15" r="15" fill="#f1400f" />
            <rect x="7" y="7" width="16" height="16" rx="2" fill="none" stroke="#fff" strokeWidth="1.500" />
            <path d="M9 10l3 10 3-7 3 7 3-10" fill="none" stroke="#fff" strokeWidth="2" />
          </svg>
        </div>
        <div className={tile}>
          <div className="w-[44px] h-[50px] rounded-[4px] bg-[#3b3428] flex items-center justify-center">
            <svg width="24" height="32" viewBox="0 0 24 32">
              <rect x="15" y="0" width="9" height="32" rx="1" fill="#d8a11a" />
              <rect x="7.500" y="8" width="9" height="24" rx="1" fill="#f1c63a" />
              <rect x="0" y="16" width="9" height="16" rx="1" fill="#f9e07c" />
            </svg>
          </div>
          <span className="absolute bottom-[5px] left-[17px] w-[20px] h-[3px] rounded-full bg-[#4cc2ff]" />
        </div>
        <div className={tile}>
          <svg width="36" height="40" viewBox="0 0 36 40" className="ml-[2px]">
            <g transform="translate(0 6)">
              <path d="M15 16L3 6A15 15 0 0 1 29 8H15z" fill="#e33b2e" />
              <path d="M8 16L3 6a15 15 0 0 0 11 25l6-10z" fill="#2da94f" />
              <path d="M15 1h0M29 8a15 15 0 0 1-15 23l6-10 9-13z" fill="#f9bc15" />
              <circle cx="15" cy="16" r="7" fill="#fff" />
              <circle cx="15" cy="16" r="5.500" fill="#2c7de6" />
            </g>
            <circle cx="26" cy="11" r="10" fill="#6264c6" />
            <text x="26" y="15" textAnchor="middle" fontSize="10" fill="#fff">v</text>
          </svg>
          <span className={dot} />
        </div>
        <div className={tile}>
          <svg width="28" height="30" viewBox="0 0 28 30">
            <rect width="28" height="30" rx="3" fill="#b30b00" />
            <path d="M5 23c4-2 8-9 8-15 0-4 2-3 2 0 0 6 5 11 9 11 1 1 0 2-2 1-5-1-11 0-15 2-2 2-3 2-2 1z" fill="none" stroke="#fff" strokeWidth="1.500" />
          </svg>
          <span className={dot} />
        </div>
      </div>
      <div className="flex-1 flex items-center justify-end pr-[23px]">
        <ChevronUp size={19} strokeWidth={2} className="mr-[23px]" />
        <div className="leading-[21px] text-center mr-[26px]">
          <div>ENG</div>
          <div>IN</div>
        </div>
        <svg width="20" height="17" viewBox="0 0 20 17" fill="none" stroke="#f3f3f3" strokeWidth="1.500" className="mr-[9px]"><path d="M1 6a13 13 0 0 1 18 0M4 9.500a9 9 0 0 1 12 0M7 12.500a4.500 4.500 0 0 1 6 0" /><circle cx="10" cy="15" r="1" fill="#f3f3f3" /></svg>
        <svg width="20" height="17" viewBox="0 0 20 17" fill="none" stroke="#f3f3f3" strokeWidth="1.300" className="mr-[10px]"><path d="M1 6h3l5-4v13l-5-4H1zM12 5c2 2 2 5 0 7" /><path d="M15 3c3 3 3 8 0 11" stroke="#777" /></svg>
        <svg width="20" height="17" viewBox="0 0 20 17" fill="none" stroke="#f3f3f3" strokeWidth="1.500" className="mr-[22px]"><rect x="1" y="2" width="15" height="13" rx="3" /><rect x="3.500" y="4.500" width="4" height="8" fill="#f3f3f3" stroke="none" /><path d="M18 6v5" strokeWidth="2" /></svg>
        <div className="leading-[21px] text-right">
          <div>21:24</div>
          <div>03-06-2025</div>
        </div>
      </div>
    </div>
  );
}

export default function App() {
  return (
    <div className="w-[1920px] h-[1080px] overflow-hidden flex flex-col bg-[#141414] font-['Open_Sans',sans-serif]">
      <div className="h-[45px] shrink-0 flex items-center text-[#e6e6e6]">
        <svg width="20" height="20" viewBox="0 0 20 20" fill="none" stroke="#e0e0e0" strokeWidth="1.500" className="ml-[21px]">
          <path d="M1 1h15l3 3v15H1zM5 1v6h9V1M5 19v-7h10v7" />
        </svg>
        <svg width="20" height="20" viewBox="0 0 20 20" fill="none" stroke="#e0e0e0" strokeWidth="1.400" className="ml-[17px]">
          <path d="M7 1L2 6l5 4M2 6h9c4 0 7 2.500 7 6s-3 7-8 7" />
        </svg>
        <svg width="20" height="20" viewBox="0 0 20 20" fill="none" stroke="#6e6e6e" strokeWidth="1.400" className="ml-[17px]">
          <path d="M13 1l5 5-5 4M18 6H9c-4 0-7 2.500-7 6s3 7 8 7" />
        </svg>
        <span className="ml-[11px] text-[14.200px] whitespace-nowrap">Superstore sales dashboard (1) • Last saved: Today at 9:22 pm</span>
        <svg width="12" height="8" viewBox="0 0 12 8" fill="none" stroke="#d0d0d0" className="ml-[9px] mb-[4px]"><path d="M1 1h10L6 7zM1 -1" /></svg>
        <span className="ml-auto text-[14px]">vikash kumar</span>
        <div className="ml-[12px] w-[25px] h-[25px] rounded-full bg-[#3a3a3a] flex items-center justify-center">
          <svg width="14" height="16" viewBox="0 0 14 16" fill="none" stroke="#d8d8d8" strokeWidth="1.300"><circle cx="7" cy="4.500" r="3.500" /><path d="M1 15v-3c0-1.500 1-2 2-2h8c1 0 2 .5 2 2v3c-2 1-10 1-12 0z" /></svg>
        </div>
        <Minus size={14} color="#e6e6e6" className="ml-[40px]" />
        <Square size={12} color="#e6e6e6" className="ml-[42px]" />
        <X size={17} color="#e6e6e6" strokeWidth={1.500} className="ml-[40px] mr-[18px]" />
      </div>
      <div className="h-[43px] shrink-0 flex items-center pl-[29px] pb-[7px] text-[17px] text-[#dedede]">
        <div className="w-[67px]">File</div>
        <div className="w-[77px] text-white font-semibold relative">
          Home
          <span className="absolute left-0 top-[26px] w-[48px] h-[3px] bg-[#2aa892]" />
        </div>
        <div className="w-[73px]">Insert</div>
        <div className="w-[103px]">Modeling</div>
        <div className="w-[66px]">View</div>
        <div className="w-[100px]">Optimize</div>
        <div className="w-[64px]">Help</div>
        <div className="w-[89px] text-[#2aa892] font-semibold">Format</div>
        <div className="w-[120px] text-[#2aa892] font-semibold">Data / Drill</div>
        <div className="ml-auto mr-[7px] w-[105px] h-[30px] rounded-[4px] bg-[#0f6b5b] flex items-center justify-center gap-[8px] text-[14px] text-[#d8d8d8]">
          <svg width="20" height="20" viewBox="0 0 20 20" fill="none" stroke="#d8d8d8" strokeWidth="1.300"><path d="M12 1l7 6-7 6V9.500C7 9.500 5 12 4 15c0-6 3-9.500 8-10zM1 7v12h15v-3" /></svg>
          <span className="flex items-center">Share<ChevronDown size={15} className="ml-[4px]" /></span>
        </div>
      </div>
      <Ribbon />
      <div className="h-[777px] shrink-0 flex">
        <div className="w-[51px] shrink-0 h-full border-r border-[#555] flex flex-col items-center relative">
          <span className="absolute left-0 top-0 w-[3px] h-[50px] bg-[#2aa892]" />
          <svg width="18" height="18" viewBox="0 0 18 18" fill="none" stroke="#e6e6e6" strokeWidth="1.200" className="mt-[15px]"><path d="M1 0v17h17M4 5h3v9H4zM9 9h3v5H9zM14 2h3v12h-3z" /></svg>
          <svg width="21" height="20" viewBox="0 0 21 20" fill="none" stroke="#c8c6c4" strokeWidth="1.300" className="mt-[30px]"><path d="M1 1h19v18H1zM1 5h19M1 10h19M1 15h19M7 5v14M14 5v14" /></svg>
          <svg width="23" height="23" viewBox="0 0 23 23" fill="none" stroke="#c8c6c4" strokeWidth="1.200" className="mt-[29px]"><path d="M12 1h10v8H12zM1 7h9v8H1zM12 14h10v8H12zM12 5h10M12 18h10M1 11h9M10 9l2 0M10 13l2 3" /></svg>
          <div className="mt-[28px] relative w-[22px] h-[20px]">
            <svg width="22" height="20" viewBox="0 0 22 20" fill="none" stroke="#c8c6c4" strokeWidth="1.100"><path d="M6 10V1h7l4 4v9M13 1v4h4M19 8c2 3 2 7-1 10" /></svg>
            <span className="absolute left-[-1px] top-[12px] text-[7.500px] leading-[8px] font-bold text-[#d0d0d0]">DAX</span>
          </div>
        </div>
        <Canvas />
        <div className="w-[41px] shrink-0 h-full bg-white border-l border-[#aaa] flex flex-col items-center text-[#252423]">
          <ChevronsLeft size={15} strokeWidth={2.500} className="mt-[15px]" />
          <svg width="11" height="11" viewBox="0 0 11 11" fill="none" stroke="#444" strokeWidth="1" className="mt-[24px]"><path d="M1 5h3M6 3v6M10 0v11" /></svg>
          <div className="mt-[9px] ml-[2px] [writing-mode:vertical-rl] text-[18px] leading-[20px] font-semibold">Filters</div>
        </div>
        <VizPane />
        <DataPane />
      </div>
      <div className="h-[30px] shrink-0 border-t border-[#555] flex items-center text-[14px] text-[#c8c6c4] pl-[5px]">
        <span>Page 2 of 2</span>
        <div className="ml-auto flex items-center pr-[23px]">
          <Minus size={10} strokeWidth={3} />
          <div className="ml-[4px] w-[125px] h-[1px] bg-[#c8c6c4] relative">
            <span className="absolute left-[60px] top-[-6px] w-[5px] h-[13px] bg-[#c8c6c4]" />
          </div>
          <Plus size={14} strokeWidth={2.500} className="ml-[5px]" />
          <span className="ml-[12px]">100%</span>
          <svg width="19" height="13" viewBox="0 0 19 13" fill="none" stroke="#c8c6c4" strokeWidth="1.300" className="ml-[17px]"><rect x="1" y="1" width="17" height="11" rx="2" /><path d="M5 4v5M14 4v5" /></svg>
        </div>
      </div>
      <Taskbar />
    </div>
  );
}
